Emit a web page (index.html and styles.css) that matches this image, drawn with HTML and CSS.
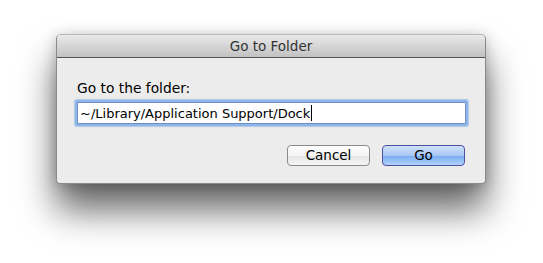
FILE: index.html
```html
<!DOCTYPE html>
<html>
<head>
<meta charset="utf-8">
<link rel="stylesheet" href="styles.css">
</head>
<body>
<div class="window">
  <div class="titlebar">Go to Folder</div>
  <div class="content">
    <div class="label">Go to the folder:</div>
    <div class="field"><span class="value">~/Library/Application Support/Dock</span><span class="caret"></span></div>
    <div class="buttons">
      <div class="btn cancel">Cancel</div>
      <div class="btn go">Go</div>
    </div>
  </div>
</div>
</body>
</html>
```
FILE: styles.css
```css
html, body {
  margin: 0;
  padding: 0;
  background: #ffffff;
}
body {
  height: 263px;
  box-sizing: border-box;
  padding: 34px 0 0 56px;
  font-family: "DejaVu Sans", "Liberation Sans", sans-serif;
  font-size: 13px;
  color: #000;
}
.window {
  width: 430px;
  height: 150px;
  box-sizing: border-box;
  border: 1px solid #8a8a8a;
  border-top-color: #b8b8b8;
  border-radius: 5px 5px 4px 4px;
  background: #ececec;
  box-shadow: 0 26px 36px rgba(0,0,0,0.6), 0 2px 14px rgba(0,0,0,0.22);
  display: flex;
  flex-direction: column;
  overflow: hidden;
}
.titlebar {
  height: 23px;
  box-sizing: border-box;
  border-bottom: 1px solid #555;
  background: linear-gradient(#e9e9e9, #c2c2c2);
  text-align: center;
  line-height: 22px;
  font-size: 13.5px;
  color: #333;
}
.content {
  flex: 1;
  display: flex;
  flex-direction: column;
  padding: 22px 19px 0 19px;
}
.label {
  font-size: 13.8px;
  line-height: 16px;
  height: 16px;
  margin-left: 1px;
}
.field {
  margin-top: 6px;
  height: 22px;
  box-sizing: border-box;
  width: 389px;
  margin-left: 1px;
  background: #fff;
  border: 1px solid #6e8fc6;
  box-shadow: 0 0 0 2px #8cb5ea, 0 0 1px 3px rgba(120,165,225,0.5);
  border-radius: 1px;
  display: flex;
  align-items: center;
  padding-left: 2px;
  font-size: 13px;
}
.caret {
  width: 1px;
  height: 16px;
  background: #000;
  margin-left: 1px;
}
.buttons {
  margin-top: 21px;
  display: flex;
  justify-content: flex-end;
  gap: 12px;
  padding-right: 1px;
}
.btn {
  width: 83px;
  height: 21px;
  box-sizing: border-box;
  border-radius: 4px;
  text-align: center;
  line-height: 19px;
  font-size: 13.5px;
}
.cancel {
  border: 1px solid #8b8b8b;
  background: linear-gradient(#ffffff, #f3f3f3 50%, #e4e4e4 51%, #f6f6f6);
}
.go {
  border: 1px solid #4d4fa0;
  background: linear-gradient(#cfe1f9, #a8c8f4 50%, #78aaf0 51%, #b0d3fb);
}
```
